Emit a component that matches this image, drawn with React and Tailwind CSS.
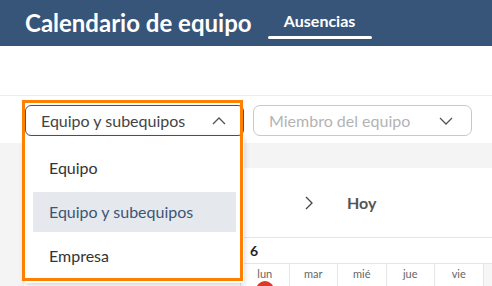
import React from "react";

const Chevron = ({ dir = "down", className = "", color = "#555" }) => (
  <svg width="14" height="8" viewBox="0 0 14 8" className={className}>
    <polyline
      points={dir === "down" ? "1,1 7,7 13,1" : "1,7 7,1 13,7"}
      fill="none"
      stroke={color}
      strokeWidth="1.3"
    />
  </svg>
);

export default function App() {
  return (
    <div
      className="relative w-[492px] h-[286px] overflow-hidden bg-white"
      style={{ fontFamily: "Lato, 'Open Sans', sans-serif" }}
    >
      {/* Header */}
      <div className="h-[46px] bg-[#375579] flex items-center pl-[25px]">
        <h1 className="text-[24px] font-bold text-white leading-none">
          Calendario de equipo
        </h1>
        <div className="ml-[16px] w-[104px] h-[46px] flex flex-col items-center justify-center relative">
          <span className="text-[16px] font-bold text-white leading-none mb-[4px]">Ausencias</span>
          <div className="absolute left-0 right-0 top-[36px] h-[2.5px] bg-white rounded-full" />
        </div>
      </div>

      {/* Blank area */}
      <div className="h-[50px] border-b border-[#ececec]" />

      {/* Filter row */}
      <div className="h-[47px] flex items-start pt-[9px] pl-[25px] gap-[9px]">
        <div className="w-[219px] h-[31px] border border-[#3d5575] rounded-[6px] flex items-center justify-between pl-[15px] pr-[17px]">
          <span className="text-[16px] text-[#444]">Equipo y subequipos</span>
          <Chevron dir="up" />
        </div>
        <div className="w-[219px] h-[31px] border border-[#c9c9c9] rounded-[7px] flex items-center justify-between pl-[15px] pr-[18px]">
          <span className="text-[16px] text-[#b3b3b3]">Miembro del equipo</span>
          <Chevron dir="down" />
        </div>
      </div>

      {/* Page background area */}
      <div className="bg-[#f4f4f4] pt-[25px] pl-[24px] h-[143px]">
        <div className="bg-white h-full">
          <div className="h-[70px] flex items-center border-b border-[#e6e6e6]">
            <div className="ml-[281px] w-[8px] flex items-center">
              <svg width="8" height="14" viewBox="0 0 8 14">
                <polyline points="1,1 7,7 1,13" fill="none" stroke="#444" strokeWidth="1.3" />
              </svg>
            </div>
            <span className="ml-[34px] text-[16px] font-bold text-[#555]">Hoy</span>
          </div>
          <div className="h-[26px] flex items-center border-b border-[#e6e6e6]">
            <span className="ml-[226px] text-[14px] font-bold text-[#222]">6</span>
          </div>
          <div className="flex h-[30px]">
            <div className="w-[216px]" />
            {["lun", "mar", "mié", "jue", "vie"].map((d, i) => (
              <div
                key={d}
                className="w-[48.5px] border-l border-[#e6e6e6] flex flex-col items-center pt-[4px] relative"
              >
                <span className="text-[11px] text-[#666] leading-none">{d}</span>
                {i === 0 && (
                  <div className="absolute top-[17px] w-[18px] h-[18px] rounded-full bg-[#d63a2a]" />
                )}
              </div>
            ))}
            <div className="flex-1 border-l border-[#e6e6e6] bg-[#f6f6f6]" />
          </div>
        </div>
      </div>

      {/* Dropdown menu */}
      <div className="absolute left-[25px] top-[136px] w-[219px] h-[147px] bg-white shadow-[0_2px_6px_rgba(0,0,0,0.18)] pt-[12px] px-[8px] flex flex-col gap-[4px]">
        <div className="h-[40px] flex items-center pl-[16px] text-[16px] text-[#333]">Equipo</div>
        <div className="h-[40px] flex items-center pl-[16px] text-[16px] text-[#3d5575] bg-[#e5e9ee]">
          Equipo y subequipos
        </div>
        <div className="h-[40px] flex items-center pl-[16px] text-[16px] text-[#333]">Empresa</div>
      </div>

      {/* Orange highlight */}
      <div className="absolute left-[22px] top-[100px] w-[221px] h-[181px] border-[3px] border-[#ff8000] pointer-events-none" />
    </div>
  );
}
